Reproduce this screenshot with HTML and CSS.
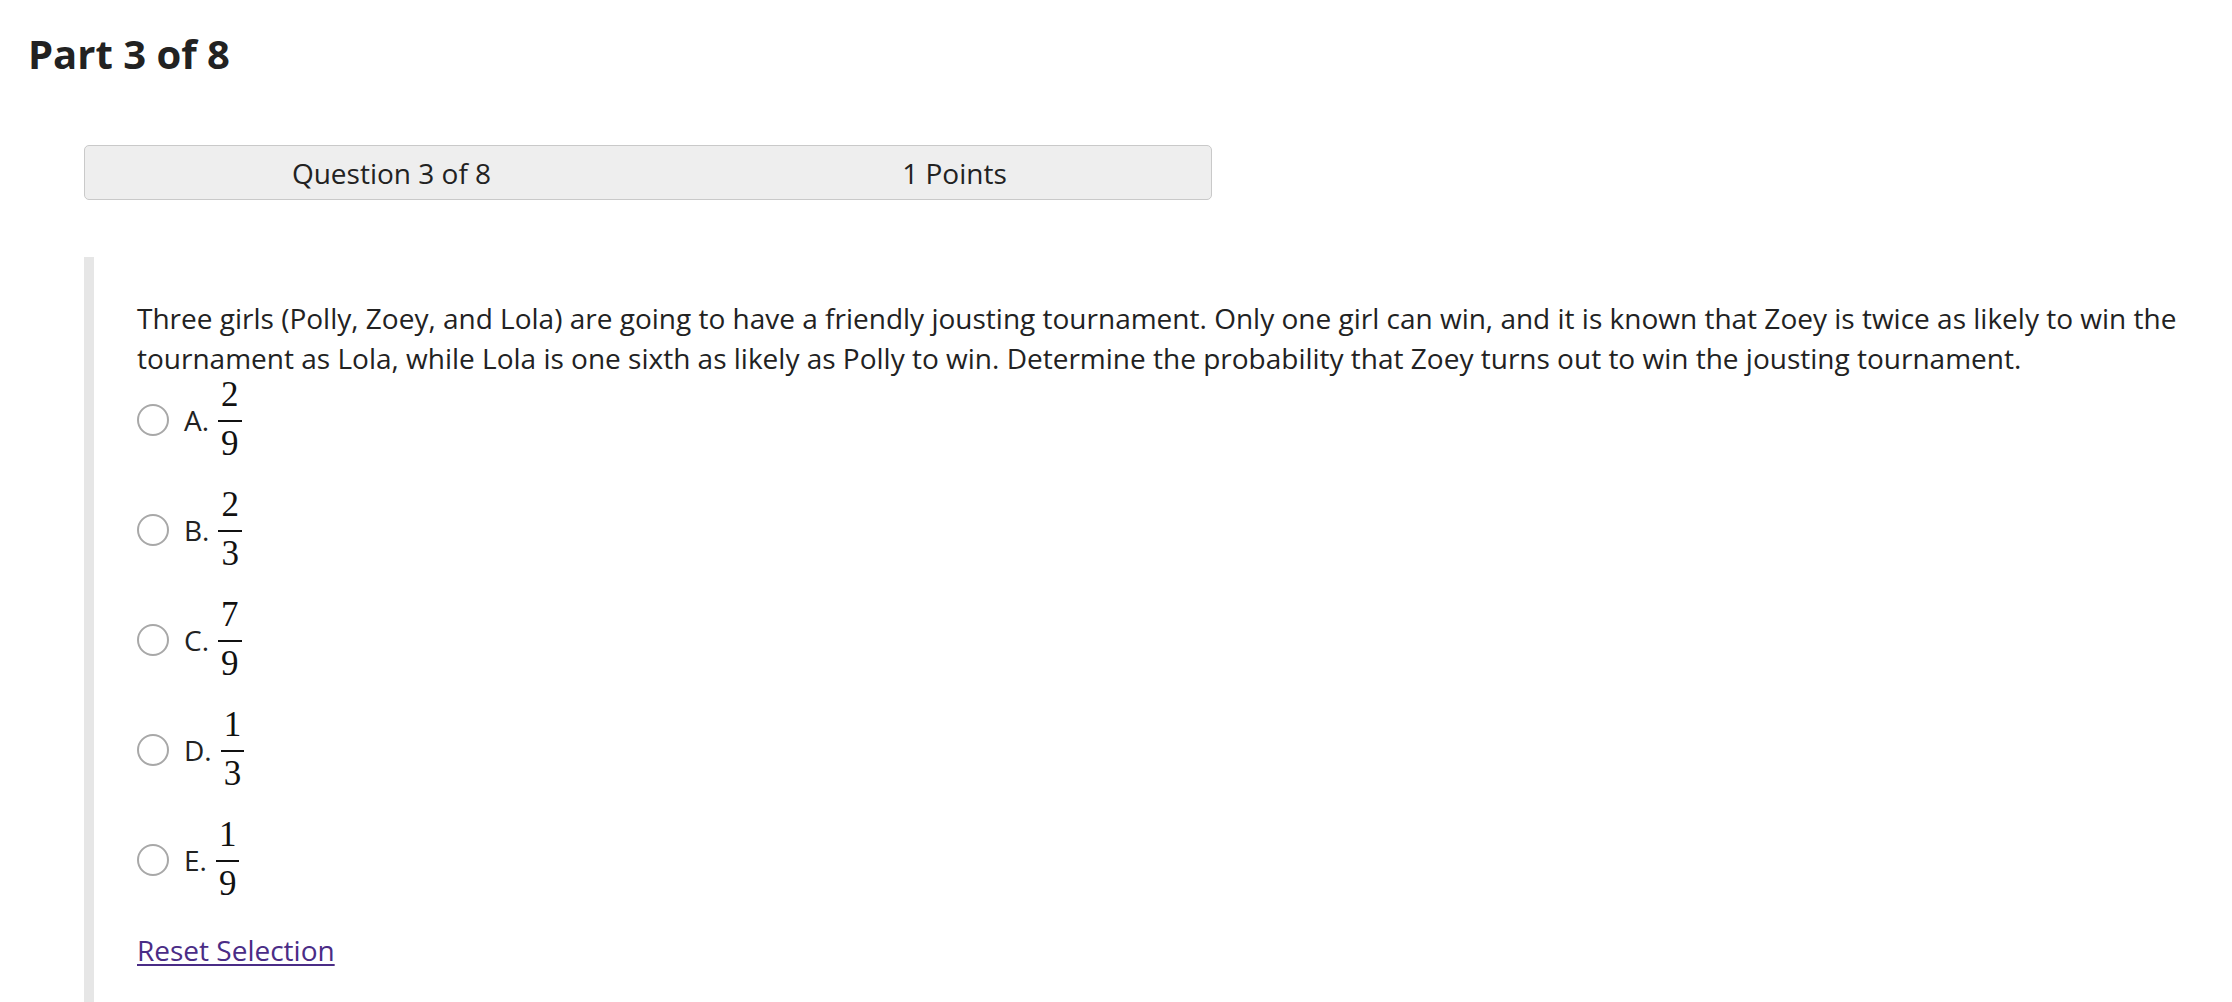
FILE: index.html
```html
<!DOCTYPE html>
<html lang="en">
<head>
<meta charset="utf-8">
<title>Part 3 of 8</title>
<link rel="stylesheet" href="styles.css">
</head>
<body>
  <h1 class="part-title">Part 3 of 8</h1>

  <div class="qbar">
    <div class="qbar-cell">Question 3 of 8</div>
    <div class="qbar-cell">1 Points</div>
  </div>

  <section class="question">
    <p class="prompt">Three girls (Polly, Zoey, and Lola) are going to have a friendly jousting tournament. Only one girl can win, and it is known that Zoey is twice as likely to win the tournament as Lola, while Lola is one sixth as likely as Polly to win. Determine the probability that Zoey turns out to win the jousting tournament.</p>

    <div class="options">
      <label class="opt">
        <span class="radio"></span>
        <span class="letter">A.</span>
        <span class="frac"><span class="num">2</span><span class="bar"></span><span class="den">9</span></span>
      </label>
      <label class="opt">
        <span class="radio"></span>
        <span class="letter">B.</span>
        <span class="frac"><span class="num">2</span><span class="bar"></span><span class="den">3</span></span>
      </label>
      <label class="opt">
        <span class="radio"></span>
        <span class="letter">C.</span>
        <span class="frac"><span class="num">7</span><span class="bar"></span><span class="den">9</span></span>
      </label>
      <label class="opt">
        <span class="radio"></span>
        <span class="letter">D.</span>
        <span class="frac"><span class="num">1</span><span class="bar"></span><span class="den">3</span></span>
      </label>
      <label class="opt">
        <span class="radio"></span>
        <span class="letter">E.</span>
        <span class="frac"><span class="num">1</span><span class="bar"></span><span class="den">9</span></span>
      </label>
    </div>

    <a class="reset" href="#">Reset Selection</a>
  </section>
</body>
</html>
```
FILE: styles.css
```css
html, body {
  margin: 0;
  padding: 0;
  background: #ffffff;
}

body {
  font-family: "Open Sans", "Liberation Sans", sans-serif;
  color: #222222;
  overflow: hidden;
}

.part-title {
  margin: 0;
  padding: 28px 0 0 28px;
  font-size: 40px;
  line-height: 51px;
  font-weight: 700;
  color: #222222;
}

.qbar {
  box-sizing: border-box;
  display: flex;
  width: 1128px;
  height: 55px;
  margin: 66px 0 0 84px;
  border: 1.5px solid #c9c9c9;
  border-radius: 5px;
  background: #eeeeee;
  align-items: center;
}

.qbar-cell {
  flex: 1;
  padding-left: 50px;
  text-align: center;
  font-size: 28px;
  line-height: 38px;
  color: #222222;
}

.question {
  margin: 57px 0 0 84px;
  border-left: 10px solid #e6e6e6;
  padding: 41px 30px 60px 43px;
}

.prompt {
  margin: 0;
  font-size: 28px;
  line-height: 40px;
  color: #222222;
}

.options {
  display: flex;
  flex-direction: column;
  gap: 27px;
}

.opt {
  display: flex;
  align-items: center;
  cursor: pointer;
}

.radio {
  box-sizing: border-box;
  width: 32px;
  height: 32px;
  border: 2px solid #a8a8a8;
  border-radius: 50%;
  margin-right: 15px;
  background: #ffffff;
}

.letter {
  font-size: 28px;
  line-height: 38px;
  margin-right: 8px;
  color: #222222;
}

.frac {
  display: inline-flex;
  flex-direction: column;
  align-items: stretch;
  font-family: "Liberation Serif", "Times New Roman", serif;
  font-size: 35px;
  color: #111111;
  padding: 0 1px;
}

.num, .den {
  display: block;
  text-align: center;
  line-height: 34px;
  padding: 0 3px;
}

.num {
  margin-bottom: 8px;
}

.bar {
  display: block;
  height: 2px;
  background: #111111;
}

.den {
  margin-top: 5px;
}

.reset {
  display: inline-block;
  margin-top: 29px;
  font-size: 28px;
  line-height: 40px;
  color: #4a2c86;
  text-decoration: underline;
  text-decoration-thickness: 2px;
  text-underline-offset: 3px;
}
```
